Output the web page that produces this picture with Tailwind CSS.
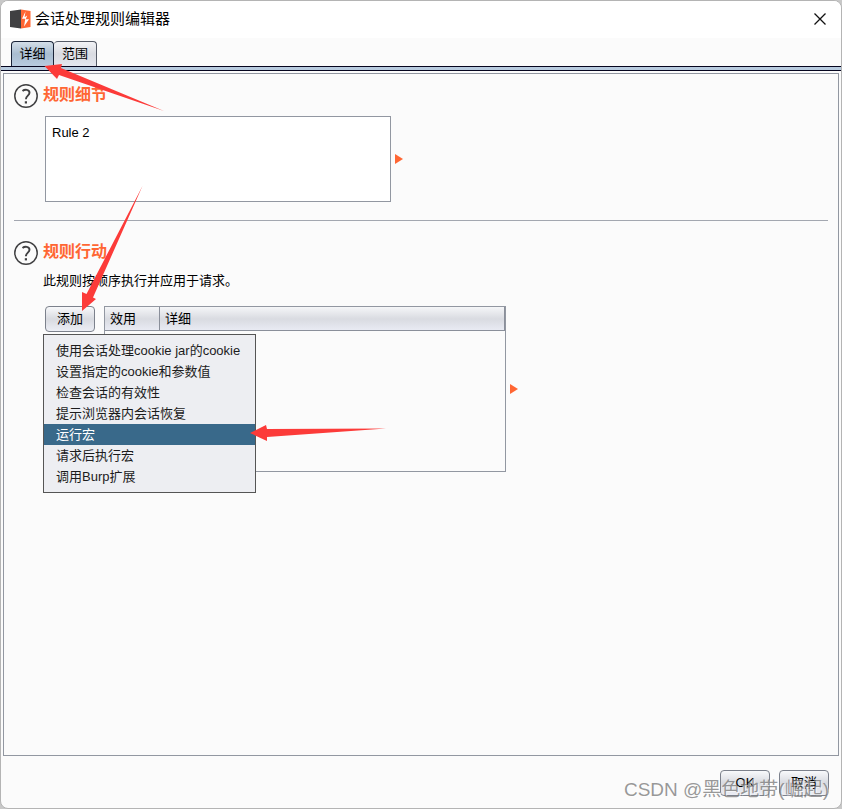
<!DOCTYPE html>
<html lang="zh-CN">
<head>
  <meta charset="UTF-8">
  <meta name="viewport" content="width=device-width, initial-scale=1.0">
  <title>会话处理规则编辑器</title>
  <script src="https://cdn.jsdelivr.net/npm/@tailwindcss/browser@4"></script>
</head>
<body class="bg-[#c8c8c8] font-['Liberation_Sans','Noto_Sans_CJK_SC',sans-serif] text-[13px] leading-[20px] text-black">
  <div class="relative min-h-screen flex flex-col bg-[#fbfbfb] border border-[#b4b4b4] rounded-lg overflow-hidden">

    <!-- Title bar -->
    <header class="h-[37px] shrink-0 flex items-center justify-between bg-white pl-[9px] pr-[14px] pb-[2px]">
      <div class="flex items-center gap-1">
        <svg class="w-[21px] h-5" viewBox="0 0 21 20" aria-hidden="true">
          <path d="M0 2 11 0.500V19.500L0 18z" fill="#404042"/>
          <path d="M11 0.500 20.500 2V18L11 19.500z" fill="#ff6633"/>
          <path d="M15.500 2.500 12 9.800H15.300L14 17.500 19 10.200H15.800L17.200 6.500 14.600 8.200z" fill="#fff"/>
        </svg>
        <h1 class="text-[15px]">会话处理规则编辑器</h1>
      </div>
      <button type="button" aria-label="关闭" class="w-[14px] h-[14px]">
        <svg viewBox="0 0 14 14" aria-hidden="true">
          <path d="M1.5 1.5 12.5 12.5M12.5 1.5 1.5 12.5" stroke="#111" stroke-width="1.3"/>
        </svg>
      </button>
    </header>

    <!-- Tabs -->
    <nav class="shrink-0 flex items-end pt-[3px] pl-[10px]">
      <button type="button" class="w-[43px] h-[25px] rounded-t border border-b-0 border-[#1a2438] bg-linear-to-b from-[#d3dee8] via-[#a9bdd0] to-[#b8cbdf]">详细</button>
      <button type="button" class="w-[43px] h-[25px] rounded-t border border-l-0 border-b-0 border-[#555a66] bg-linear-to-b from-[#f2f3f6] via-[#d9dbe1] to-[#e4e6ee]">范围</button>
    </nav>
    <div class="h-[5px] shrink-0 border-y border-[#05051e] bg-[#b8cbdf]"></div>

    <main class="grow mt-[2px] mx-[2px] border border-[#9297a1] pl-[10px] pr-[10px]">
      <!-- Rule details -->
      <section class="pt-[10px]">
        <div class="flex items-center gap-[5px]">
          <svg class="w-6 h-6" viewBox="0 0 24 24" fill="none" aria-hidden="true">
            <circle cx="12" cy="12" r="11.2" stroke="#404042" stroke-width="1.5"/>
            <path d="M8.500 7C10.500 5.300 15.500 5 15.500 8.800 15.500 11.700 11.900 11.700 11.900 15.300" stroke="#404042" stroke-width="1.9"/>
            <path d="M10.800 17.200h2.200v2.200h-2.200z" fill="#404042"/>
          </svg>
          <h2 class="pb-[2px] text-[16px] font-bold text-[#ff6633]"><label for="rule">规则细节</label></h2>
        </div>
        <div class="mt-[8px] ml-[31px] flex items-center gap-1">
          <textarea id="rule" class="w-[346px] h-[86px] resize-none border border-[#9297a1] bg-white px-[6px] py-[6px] outline-none">Rule 2</textarea>
          <svg class="w-2 h-[10px]" viewBox="0 0 8 10" aria-hidden="true"><path d="M0 0 8 5 0 10z" fill="#ff6633"/></svg>
        </div>
      </section>

      <hr class="mt-[18px] border-[#a3a7b0]">

      <!-- Rule actions -->
      <section class="pt-[20px]">
        <div class="flex items-center gap-[5px]">
          <svg class="w-6 h-6" viewBox="0 0 24 24" fill="none" aria-hidden="true">
            <circle cx="12" cy="12" r="11.2" stroke="#404042" stroke-width="1.5"/>
            <path d="M8.500 7C10.500 5.300 15.500 5 15.500 8.800 15.500 11.700 11.900 11.700 11.900 15.300" stroke="#404042" stroke-width="1.9"/>
            <path d="M10.800 17.200h2.200v2.200h-2.200z" fill="#404042"/>
          </svg>
          <h2 class="pb-[2px] text-[16px] font-bold text-[#ff6633]">规则行动</h2>
        </div>
        <p class="mt-[6px] ml-[29px]">此规则按顺序执行并应用于请求。</p>

        <div class="mt-[15px] ml-[31px] flex items-start">
          <div class="relative mr-[9px]">
            <button type="button" aria-haspopup="menu" aria-expanded="true" class="w-[50px] h-[26px] rounded border border-[#7c818c] bg-linear-to-b from-[#f8f9fb] via-[#d8dae0] to-[#eceef5]">添加</button>
            <ul role="menu" class="absolute z-10 -left-[2px] top-[28px] w-[213px] border border-[#555] bg-[#edeef2] py-[5px] leading-[21px] whitespace-nowrap text-[#1c1c1c]">
              <li role="none"><button type="button" role="menuitem" class="block w-full pl-3 text-left">使用会话处理cookie jar的cookie</button></li>
              <li role="none"><button type="button" role="menuitem" class="block w-full pl-3 text-left">设置指定的cookie和参数值</button></li>
              <li role="none"><button type="button" role="menuitem" class="block w-full pl-3 text-left">检查会话的有效性</button></li>
              <li role="none"><button type="button" role="menuitem" class="block w-full pl-3 text-left">提示浏览器内会话恢复</button></li>
              <li role="none"><button type="button" role="menuitem" class="block w-full pl-3 text-left bg-[#39698a] text-white">运行宏</button></li>
              <li role="none"><button type="button" role="menuitem" class="block w-full pl-3 text-left">请求后执行宏</button></li>
              <li role="none"><button type="button" role="menuitem" class="block w-full pl-3 text-left">调用Burp扩展</button></li>
            </ul>
          </div>
          <div class="w-[402px] h-[166px] border border-[#9297a1]">
            <table class="w-full table-fixed border-separate border-spacing-0">
              <thead class="bg-linear-to-b from-[#f5f6f8] via-[#d9dbe1] to-[#eaecf5]">
                <tr class="h-6 text-left">
                  <th class="w-[55px] border-r border-b border-[#8a8f9a] pl-[5px] font-normal">效用</th>
                  <th class="border-r border-b border-[#8a8f9a] pl-[5px] font-normal">详细</th>
                </tr>
              </thead>
            </table>
          </div>
          <svg class="w-2 h-[10px] ml-1 self-center" viewBox="0 0 8 10" aria-hidden="true"><path d="M0 0 8 5 0 10z" fill="#ff6633"/></svg>
        </div>
      </section>
    </main>

    <footer class="shrink-0 flex justify-end gap-[9px] pt-[14px] pb-[12px] pr-[12px]">
      <button type="button" class="w-[50px] h-[26px] rounded border border-[#7c818c] bg-linear-to-b from-[#f8f9fb] via-[#d8dae0] to-[#eceef5]">OK</button>
      <button type="button" class="w-[50px] h-[26px] rounded border border-[#7c818c] bg-linear-to-b from-[#f8f9fb] via-[#d8dae0] to-[#eceef5]">取消</button>
    </footer>

    <!-- Annotation arrows -->
    <svg class="absolute -left-px -top-px z-20 w-[400px] h-[450px] pointer-events-none" viewBox="0 0 400 450" fill="#fc3b39" aria-hidden="true">
      <path d="M44.500 66 62 64 61 68 164 111 59 75 57 79z"/>
      <path d="M82 311V292L86.500 294 142.500 186 93 297.500 96 299z"/>
      <path d="M250 433 266 425 267 429 386 428.500 267 437V441z"/>
    </svg>
    <!-- Watermark -->
    <p class="absolute right-[12px] bottom-[4px] z-20 text-[19px] leading-[28px] whitespace-nowrap text-[#777]/75 text-shadow-[1px_1px_0_#ffffff99] pointer-events-none">CSDN @黑色地带(崛起)</p>
  </div>
</body>
</html>
